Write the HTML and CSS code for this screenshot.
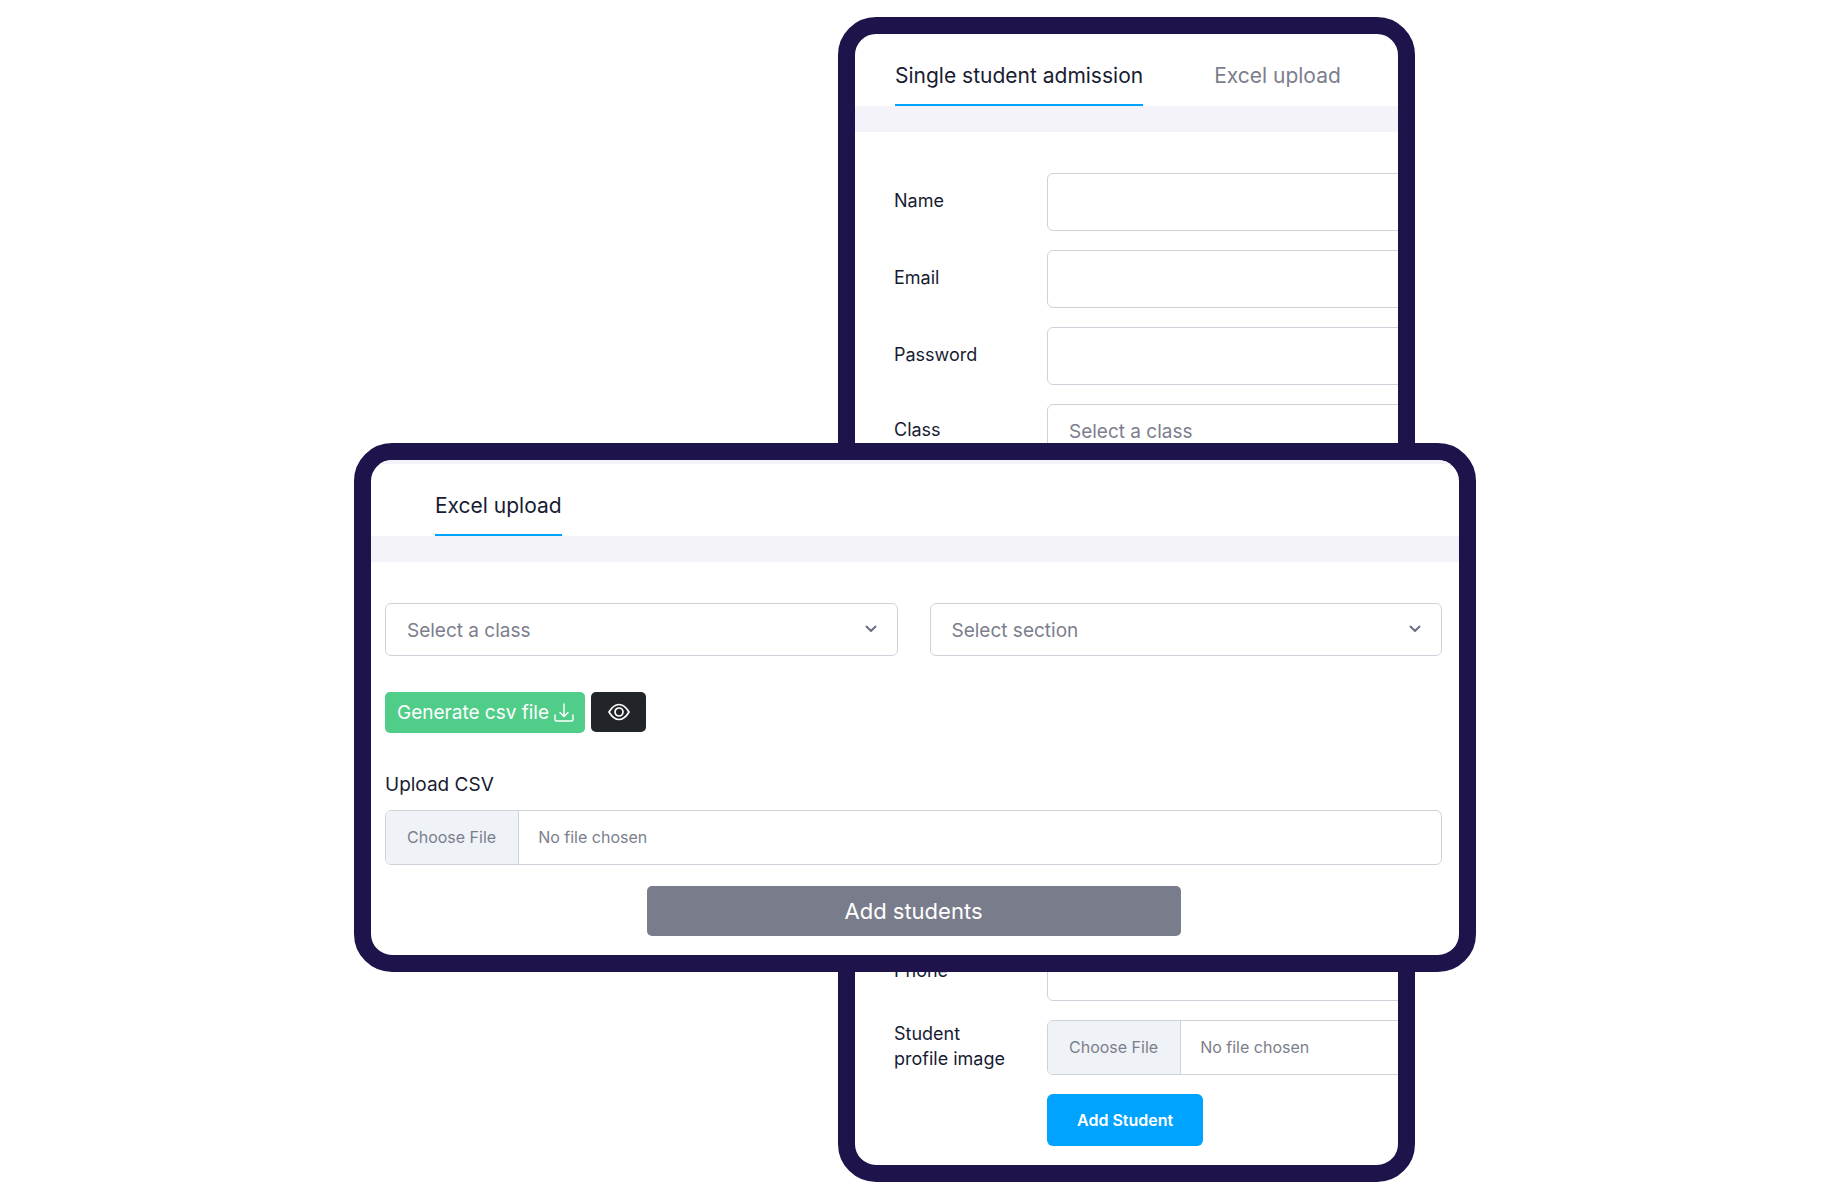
FILE: index.html
```html
<!DOCTYPE html>
<html lang="en">
<head>
<meta charset="utf-8">
<meta name="viewport" content="width=device-width, initial-scale=1">
<title>Student admission</title>
<link rel="stylesheet" href="styles.css">
</head>
<body>
<main class="stage">
  <section class="frame frame-single">
    <nav class="tabs">
      <a class="tab tab-active" href="#single">Single student admission</a>
      <a class="tab" href="#excel">Excel upload</a>
    </nav>
    <form class="single-form" id="single">
      <div class="rows">
        <div class="row">
          <label class="label" for="name">Name</label>
          <input class="control control-tall" id="name" type="text">
        </div>
        <div class="row">
          <label class="label" for="email">Email</label>
          <input class="control control-tall" id="email" type="email">
        </div>
        <div class="row">
          <label class="label" for="password">Password</label>
          <input class="control control-tall" id="password" type="password">
        </div>
        <div class="row">
          <label class="label" for="class">Class</label>
          <select class="control" id="class"><option>Select a class</option></select>
        </div>
      </div>
      <div class="rows">
        <div class="row">
          <label class="label" for="phone">Phone</label>
          <input class="control control-tall" id="phone" type="tel">
        </div>
        <div class="row">
          <label class="label" for="photo">Student profile image</label>
          <input class="control file" id="photo" type="file">
        </div>
        <div class="row row-action">
          <button class="btn btn-primary" type="button">Add Student</button>
        </div>
      </div>
    </form>
  </section>

  <section class="frame frame-excel">
    <nav class="tabs tabs-excel">
      <a class="tab tab-active" href="#excel">Excel upload</a>
    </nav>
    <form class="excel-form" id="excel">
      <div class="pickers">
        <div class="picker">
          <select class="control" aria-label="Class"><option>Select a class</option></select>
          <svg class="chevron" viewBox="0 0 12 8" aria-hidden="true"><path d="M1.500 1.500 6 6 10.500 1.500"/></svg>
        </div>
        <div class="picker">
          <select class="control" aria-label="Section"><option>Select section</option></select>
          <svg class="chevron" viewBox="0 0 12 8" aria-hidden="true"><path d="M1.500 1.500 6 6 10.500 1.500"/></svg>
        </div>
      </div>
      <div class="actions">
        <button class="btn btn-success" type="button">Generate csv file
          <svg class="icon-download" viewBox="0 0 20 20" aria-hidden="true"><path d="M1 12v4.500q0 1.500 1.500 1.500h15q1.500 0 1.500-1.500V12M10 1v12.500M6 9.500l4 4 4-4"/></svg>
        </button>
        <button class="btn btn-dark" type="button" aria-label="Preview">
          <svg class="icon-eye" viewBox="0 0 22 18" aria-hidden="true"><path d="M1 9Q5.500 1.500 11 1.500T21 9Q16.500 16.500 11 16.500T1 9Z"/><circle cx="11" cy="9" r="4"/></svg>
        </button>
      </div>
      <label class="upload-label" for="csv">Upload CSV</label>
      <input class="control file" id="csv" type="file">
      <button class="btn btn-secondary" type="button">Add students</button>
    </form>
  </section>
</main>
</body>
</html>
```
FILE: styles.css
```css
:root {
  --navy: #1e144b;
  --ink: #181c32;
  --muted: #7b7e8c;
  --line: #ced3da;
  --band: #f4f3f9;
  --blue: #00a3ff;
}

* { box-sizing: border-box; }

body {
  margin: 0;
  background: #fff;
  color: var(--ink);
  font-family: Inter, "Open Sans", sans-serif;
}

/* Both frames share one grid row; the wide one lies over the tall one. */
.stage {
  display: grid;
  grid-template-columns: 484fr 577fr 61fr;
  width: 62%;
  max-width: 1122px;
  margin: 0 auto;
  padding: 17px 0 18px;
}

.frame {
  display: flex;
  flex-direction: column;
  grid-row: 1;
  border: 17px solid var(--navy);
  border-radius: 38px;
  background: #fff;
  overflow: hidden;
}

.frame-single {
  grid-column: 2;
  min-height: 1165px;
}

.frame-excel {
  grid-column: 1 / -1;
  align-self: start;
  margin-top: 426px;
  z-index: 1;
}

.tabs {
  display: flex;
  gap: 71px;
  padding-left: 40px;
  border-bottom: 26px solid var(--band);
}

.tabs-excel {
  padding-left: 64px;
  border-top: 4px solid var(--band);
}

.tab {
  padding: 28px 0 14px;
  border-bottom: 2px solid transparent;
  color: var(--muted);
  font-size: 21px;
  line-height: 28px;
  white-space: nowrap;
  text-decoration: none;
}

.tab-active {
  border-color: var(--blue);
  color: var(--ink);
}

.single-form {
  display: flex;
  flex: 1;
  flex-direction: column;
  justify-content: space-between;
  padding: 41px 0 19px 39px;
}

.rows {
  display: grid;
  gap: 19px;
}

/* Fields run on past the right edge of the frame. */
.row {
  display: flex;
  align-items: center;
  margin-right: -20px;
}

.row-action { padding-left: 153px; }

.label {
  flex: none;
  width: 153px;
  padding: 0 36px 3px 0;
  font-size: 18px;
  line-height: 25px;
}

.control {
  display: block;
  width: 100%;
  min-width: 0;
  height: 53px;
  margin: 0;
  padding: 2px 21px 0;
  border: 1px solid var(--line);
  border-radius: 6px;
  background: #fff;
  color: var(--muted);
  font: inherit;
  font-size: 19px;
  appearance: none;
}

.control-tall { height: 58px; }

.file {
  height: 55px;
  padding: 0;
  font-size: 16px;
  line-height: 24px;
  overflow: hidden;
}

.file::file-selector-button {
  height: 53px;
  margin: 0 19px 0 0;
  padding: 0 22px 2px 21px;
  border: 0;
  border-right: 1px solid var(--line);
  background: #eff2f7;
  color: var(--muted);
  font: inherit;
}

.btn {
  border: 0;
  border-radius: 5px;
  color: #fff;
  font: inherit;
}

.btn-primary {
  padding: 14px 30px;
  border-radius: 6px;
  background: var(--blue);
  font-size: 16px;
  font-weight: 600;
  line-height: 24px;
}

.excel-form {
  display: flex;
  flex-direction: column;
  padding: 41px 17px 19px 14px;
}

.pickers {
  display: grid;
  grid-template-columns: 1fr 1fr;
  gap: 32px;
}

.picker { position: relative; }

.chevron {
  position: absolute;
  top: 22px;
  right: 21px;
  width: 12px;
  height: 8px;
  fill: none;
  stroke: #6c7080;
  stroke-width: 2;
  stroke-linecap: round;
  stroke-linejoin: round;
}

.actions {
  display: flex;
  align-items: flex-start;
  gap: 6px;
  margin: 36px 0 39px;
}

.btn-success {
  display: flex;
  align-items: center;
  gap: 5px;
  height: 41px;
  padding: 0 11px 0 12px;
  background: #50cd89;
  font-size: 19px;
}

.btn-dark {
  display: grid;
  place-items: center;
  width: 55px;
  height: 40px;
  padding: 0;
  background: #212529;
}

.icon-download,
.icon-eye {
  fill: none;
  stroke: #fff;
  stroke-linecap: round;
  stroke-linejoin: round;
}

.icon-download {
  width: 20px;
  height: 20px;
  stroke-width: 1.4;
}

.icon-eye {
  width: 22px;
  height: 18px;
  stroke-width: 1.7;
}

.upload-label {
  margin-bottom: 12px;
  font-size: 19px;
  line-height: 26px;
}

.btn-secondary {
  align-self: center;
  width: 100%;
  max-width: 534px;
  margin-top: 21px;
  padding: 10px;
  background: #797c8b;
  font-size: 22px;
  line-height: 30px;
}
```
